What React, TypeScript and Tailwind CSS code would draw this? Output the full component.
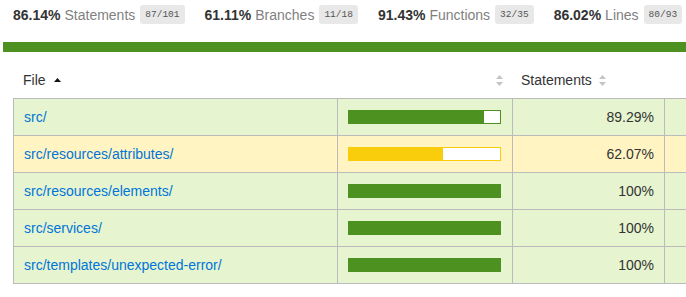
import React from "react";

interface Metric {
  pct: string;
  label: string;
  fraction: string;
}

interface Row {
  file: string;
  pct: number;
  level: "high" | "medium";
}

const metrics: Metric[] = [
  { pct: "86.14%", label: "Statements", fraction: "87/101" },
  { pct: "61.11%", label: "Branches", fraction: "11/18" },
  { pct: "91.43%", label: "Functions", fraction: "32/35" },
  { pct: "86.02%", label: "Lines", fraction: "80/93" },
];

const rows: Row[] = [
  { file: "src/", pct: 89.29, level: "high" },
  { file: "src/resources/attributes/", pct: 62.07, level: "medium" },
  { file: "src/resources/elements/", pct: 100, level: "high" },
  { file: "src/services/", pct: 100, level: "high" },
  { file: "src/templates/unexpected-error/", pct: 100, level: "high" },
];

const SortBoth = () => (
  <svg width="7" height="11" viewBox="0 0 7 11" className="shrink-0">
    <polygon points="0,4 3.5,0 7,4" fill="#c4c4c4" />
    <polygon points="0,7 3.5,11 7,7" fill="#c4c4c4" />
  </svg>
);

const SortAsc = () => (
  <svg width="7" height="4" viewBox="0 0 7 4" className="shrink-0">
    <polygon points="0,4 3.5,0 7,4" fill="#111" />
  </svg>
);

function CoverBar({ pct, level }: { pct: number; level: Row["level"] }) {
  const high = level === "high";
  return (
    <div
      className={`flex h-[14px] w-[153px] border ${
        high ? "border-[#4d9221]" : "border-[#f9cd0b]"
      } bg-white`}
    >
      <div
        className={high ? "h-full bg-[#4d9221]" : "h-full bg-[#f9cd0b]"}
        style={{ width: `${pct}%` }}
      />
    </div>
  );
}

export default function App() {
  return (
    <div className="w-[686px] h-[297px] overflow-hidden bg-white text-[14px] leading-[16px] text-[#333] font-['Liberation_Sans',Arial,sans-serif]">
      <div className="flex items-center pl-[13px] pt-[5px] whitespace-nowrap">
        {metrics.map((m) => (
          <div key={m.label} className="flex items-center pr-[20px]">
            <span className="font-bold">{m.pct}</span>
            <span className="ml-[4px] text-[#7f7f7f]">{m.label}</span>
            <span className="ml-[5px] flex h-[19px] items-center rounded-[3px] bg-[#e8e8e8] px-[5px] text-[9.5px] text-[#555] font-['Liberation_Mono',monospace]">
              {m.fraction}
            </span>
          </div>
        ))}
      </div>

      <div className="ml-[3px] mt-[18px] h-[10px] w-[700px] bg-[#4d9221]" />

      <div className="ml-[13px] mt-[10px] w-[900px]">
        <div className="flex h-[36px] items-center">
          <div className="flex w-[325px] items-center gap-[8px] px-[10px]">
            <span>File</span>
            <SortAsc />
          </div>
          <div className="flex w-[175px] justify-end px-[10px]">
            <SortBoth />
          </div>
          <div className="flex w-[153px] items-center gap-[7px] px-[8px]">
            <span>Statements</span>
            <SortBoth />
          </div>
        </div>

        <div className="border-l border-t border-[#bbb]">
          {rows.map((r) => (
            <div
              key={r.file}
              className={`flex ${r.level === "high" ? "bg-[#e6f5d0]" : "bg-[#fff4c2]"}`}
            >
              <div className="w-[324px] border-b border-r border-[#bbb] p-[10px]">
                <a href="#" className="text-[#0074d9]">
                  {r.file}
                </a>
              </div>
              <div className="flex w-[175px] items-center border-b border-r border-[#bbb] px-[10px]">
                <CoverBar pct={r.pct} level={r.level} />
              </div>
              <div className="w-[152px] border-b border-r border-[#bbb] p-[10px] text-right">
                {r.pct === 100 ? "100%" : `${r.pct.toFixed(2)}%`}
              </div>
              <div className="w-[120px] border-b border-r border-[#bbb] p-[10px]" />
            </div>
          ))}
        </div>
      </div>
    </div>
  );
}
